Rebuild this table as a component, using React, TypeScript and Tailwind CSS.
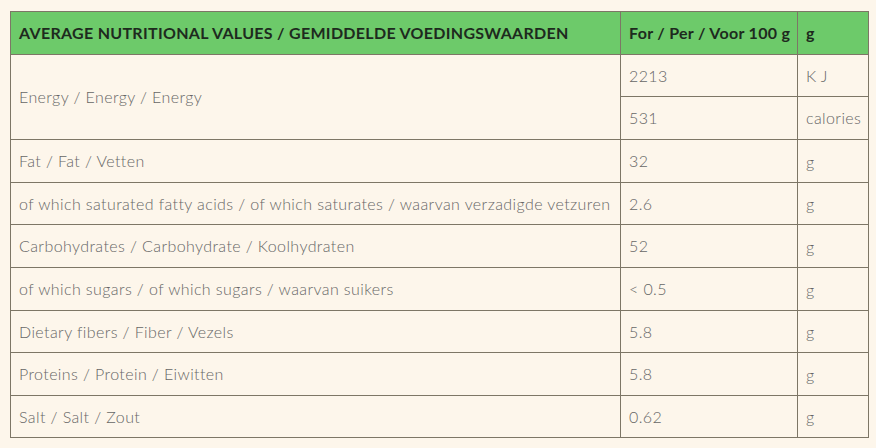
const rows: [string, string, string, string][] = [
  ["Fat / Fat / Vetten", "32", "g", "h-[43px]"],
  ["of which saturated fatty acids / of which saturates / waarvan verzadigde vetzuren", "2.6", "g", "h-[42px]"],
  ["Carbohydrates / Carbohydrate / Koolhydraten", "52", "g", "h-[43px]"],
  ["of which sugars / of which sugars / waarvan suikers", "< 0.5", "g", "h-[43px]"],
  ["Dietary fibers / Fiber / Vezels", "5.8", "g", "h-[42px]"],
  ["Proteins / Protein / Eiwitten", "5.8", "g", "h-[43px]"],
  ["Salt / Salt / Zout", "0.62", "g", "h-[42px]"],
];

const cell = "border border-[#7d7666] px-2 align-middle whitespace-nowrap overflow-hidden";

export default function App() {
  return (
    <div className="min-h-screen w-[876px] h-[448px] bg-[#fdf6eb] pt-[11px] pl-[10px] font-['Lato',sans-serif] text-[16px] leading-6 text-[#666666]">
      <table className="w-[858px] border-collapse table-fixed">
        <colgroup>
          <col className="w-[610px]" />
          <col className="w-[177px]" />
          <col className="w-[71px]" />
        </colgroup>
        <thead>
          <tr className="h-[43px] bg-[#6dca6a] text-left font-bold text-[#1e2a1e] tracking-[0.3px]">
            <th className={cell}>AVERAGE NUTRITIONAL VALUES / GEMIDDELDE VOEDINGSWAARDEN</th>
            <th className={cell}>For / Per / Voor 100 g</th>
            <th className={cell}>g</th>
          </tr>
        </thead>
        <tbody className="font-light tracking-[0.4px]">
          <tr className="h-[42px]">
            <td className={cell} rowSpan={2}>Energy / Energy / Energy</td>
            <td className={cell}>2213</td>
            <td className={cell}>K J</td>
          </tr>
          <tr className="h-[43px]">
            <td className={cell}>531</td>
            <td className={cell}>calories</td>
          </tr>
          {rows.map(([name, value, unit, h]) => (
            <tr key={name} className={h}>
              <td className={cell}>{name}</td>
              <td className={cell}>{value}</td>
              <td className={`${cell} pt-[1px]`}>{unit}</td>
            </tr>
          ))}
        </tbody>
      </table>
    </div>
  );
}
